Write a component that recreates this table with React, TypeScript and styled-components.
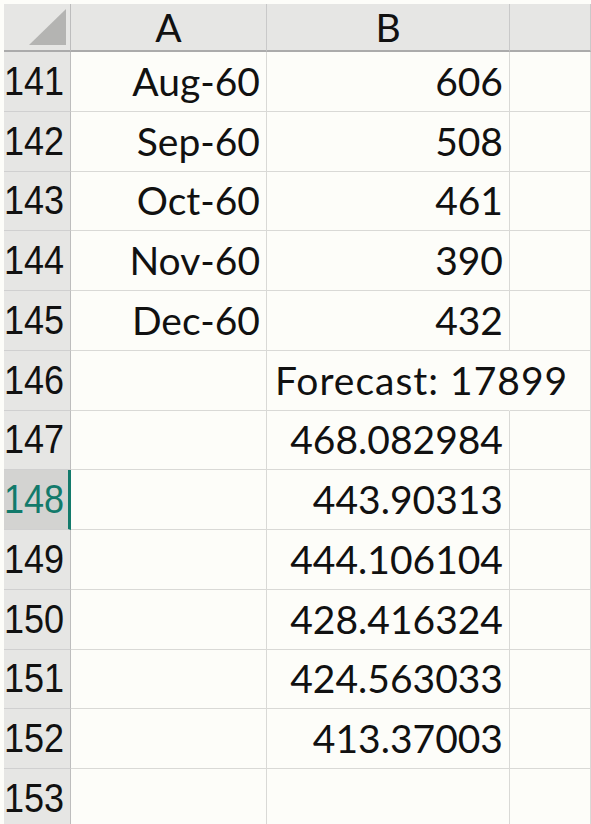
import React from "react";
import styled, { createGlobalStyle, css } from "styled-components";

const GlobalStyle = createGlobalStyle`
  html, body {
    margin: 0;
    padding: 0;
    background: #fdfdf9;
    overflow: hidden;
  }
`;

const Sheet = styled.div`
  display: grid;
  grid-template-columns: 67px 196px 243px 1fr;
  grid-template-rows: 48px repeat(13, 59.75px);
  margin: 4px 0 0 4px;
  font-family: Lato, "Open Sans", sans-serif;
  font-size: 39px;
  line-height: 1;
  color: #111;
`;

const Corner = styled.div`
  background: #e6e6e4;
  border-right: 1px solid #bdbdbd;
  border-bottom: 2px solid #ababab;
  box-sizing: border-box;
  display: flex;
  justify-content: flex-end;
  align-items: flex-end;
  padding: 0 4px 5px 0;
`;

const ColHead = styled.div`
  background: #e6e6e4;
  border-right: 1px solid #c9c9c9;
  border-bottom: 2px solid #ababab;
  box-sizing: border-box;
  display: flex;
  justify-content: center;
  align-items: flex-end;
  padding-bottom: 3px;
`;

const RowHead = styled.div<{ $active?: boolean }>`
  background: #e6e6e4;
  border-right: 1px solid #bdbdbd;
  border-bottom: 1px solid #d0d0d0;
  box-sizing: border-box;
  display: flex;
  align-items: flex-end;
  padding: 0 0 10px 0;
  font-family: "Liberation Sans", Arial, sans-serif;
  font-size: 40px;
  ${(p) =>
    p.$active &&
    css`
      background: #d3d3d1;
      color: #127a6b;
      border-right: 3px solid #127a6b;
    `}
`;

// row numbers are a touch narrower than the stock font
const RowNum = styled.span`
  display: inline-block;
  transform: scaleX(0.9);
  transform-origin: left bottom;
`;

const Cell = styled.div<{ $align?: "left" | "right"; $spill?: boolean }>`
  border-right: 1px solid #d9d9d6;
  border-bottom: 1px solid #d9d9d6;
  box-sizing: border-box;
  display: flex;
  align-items: flex-end;
  justify-content: ${(p) => (p.$align === "left" ? "flex-start" : "flex-end")};
  padding: 0 6px 10px 8px;
  white-space: nowrap;
  ${(p) =>
    p.$spill &&
    css`
      border-right-color: transparent;
      overflow: visible;
      position: relative;
      z-index: 1;
      letter-spacing: 1px;
    `}
`;

type Row = { n: number; a?: string; b?: string; spill?: boolean };

const rows: Row[] = [
  { n: 141, a: "Aug-60", b: "606" },
  { n: 142, a: "Sep-60", b: "508" },
  { n: 143, a: "Oct-60", b: "461" },
  { n: 144, a: "Nov-60", b: "390" },
  { n: 145, a: "Dec-60", b: "432" },
  { n: 146, b: "Forecast: 17899", spill: true },
  { n: 147, b: "468.082984" },
  { n: 148, b: "443.90313" },
  { n: 149, b: "444.106104" },
  { n: 150, b: "428.416324" },
  { n: 151, b: "424.563033" },
  { n: 152, b: "413.37003" },
  { n: 153 },
];

const App = () => {
  return (
    <>
      <GlobalStyle />
      <Sheet>
        <Corner>
          <svg width="37" height="36" viewBox="0 0 37 36">
            <polygon points="37,0 37,36 0,36" fill="#b4b4b2" />
          </svg>
        </Corner>
        <ColHead>A</ColHead>
        <ColHead>B</ColHead>
        <ColHead />
        {rows.map((r) => (
          <React.Fragment key={r.n}>
            <RowHead $active={r.n === 148}>
              <RowNum>{r.n}</RowNum>
            </RowHead>
            <Cell>{r.a}</Cell>
            <Cell $align={r.spill ? "left" : "right"} $spill={r.spill}>
              {r.b}
            </Cell>
            <Cell />
          </React.Fragment>
        ))}
      </Sheet>
    </>
  );
};

export default App;
